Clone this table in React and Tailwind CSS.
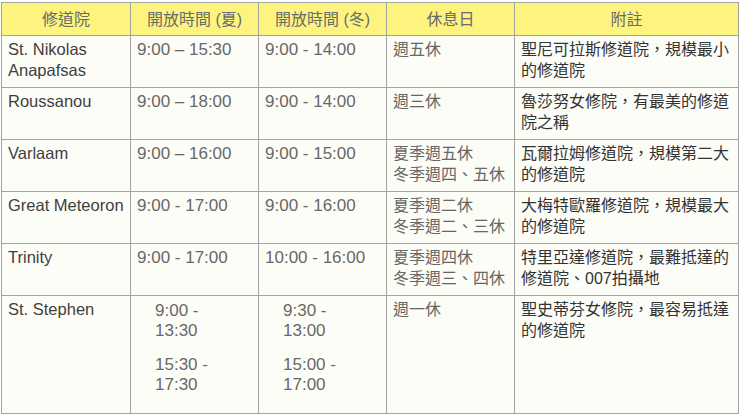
import React from 'react';

const ROWS = [
  {
    name: ['St. Nikolas', 'Anapafsas'],
    summer: '9:00 – 15:30',
    winter: '9:00 - 14:00',
    off: ['週五休'],
    note: '聖尼可拉斯修道院，規模最小的修道院',
  },
  {
    name: ['Roussanou'],
    summer: '9:00 – 18:00',
    winter: '9:00 - 14:00',
    off: ['週三休'],
    note: '魯莎努女修院，有最美的修道院之稱',
  },
  {
    name: ['Varlaam'],
    summer: '9:00 – 16:00',
    winter: '9:00 - 15:00',
    off: ['夏季週五休', '冬季週四、五休'],
    note: '瓦爾拉姆修道院，規模第二大的修道院',
  },
  {
    name: ['Great Meteoron'],
    summer: '9:00 - 17:00',
    winter: '9:00 - 16:00',
    off: ['夏季週二休', '冬季週二、三休'],
    note: '大梅特歐羅修道院，規模最大的修道院',
  },
  {
    name: ['Trinity'],
    summer: '9:00 - 17:00',
    winter: '10:00 - 16:00',
    off: ['夏季週四休', '冬季週三、四休'],
    note: '特里亞達修道院，最難抵達的修道院、007拍攝地',
  },
];

const cell = 'border border-[#a3a3a3] align-top pl-[6px] pr-[2px] pt-[3px]';
const head = 'border border-[#a3a3a3] text-center font-normal text-[#6b6b6b]';
const time = `${cell} text-[#686868] text-[17px]`;

export default function App() {
  return (
    <div className="w-[740px] h-[416px] bg-white pt-[2px] pl-[1px] font-['Liberation_Sans','Noto_Sans_CJK_TC',sans-serif] text-[16px] leading-[21px]">
      <table className="table-fixed border-collapse w-[737px] bg-[#fdfdf8]">
        <colgroup>
          <col className="w-[129px]" />
          <col className="w-[128px]" />
          <col className="w-[128px]" />
          <col className="w-[128px]" />
          <col className="w-[224px]" />
        </colgroup>
        <thead>
          <tr className="h-[33px] bg-[#fdf47f]">
            <th className={head}>修道院</th>
            <th className={head}>開放時間 (夏)</th>
            <th className={head}>開放時間 (冬)</th>
            <th className={head}>休息日</th>
            <th className={head}>附註</th>
          </tr>
        </thead>
        <tbody>
          {ROWS.map((r) => (
            <tr key={r.name[0]} className="h-[52px]">
              <td className={`${cell} text-[#3f3f3f] text-[16.5px] whitespace-nowrap`}>
                {r.name.map((n) => <div key={n}>{n}</div>)}
              </td>
              <td className={time}>{r.summer}</td>
              <td className={time}>{r.winter}</td>
              <td className={`${cell} text-[#666]`}>
                {r.off.map((o) => <div key={o}>{o}</div>)}
              </td>
              <td className={`${cell} text-[#333]`}>{r.note}</td>
            </tr>
          ))}
          <tr className="h-[118px]">
            <td className={`${cell} text-[#3f3f3f] text-[16.5px]`}>St. Stephen</td>
            <td className={time}>
              <div className="pl-[18px] pr-[20px] pt-[2px] leading-[20px] space-y-[14px]">
                <p>9:00 - 13:30</p>
                <p>15:30 - 17:30</p>
              </div>
            </td>
            <td className={time}>
              <div className="pl-[18px] pr-[20px] pt-[2px] leading-[20px] space-y-[14px]">
                <p>9:30 - 13:00</p>
                <p>15:00 - 17:00</p>
              </div>
            </td>
            <td className={`${cell} text-[#666]`}>週一休</td>
            <td className={`${cell} text-[#333]`}>聖史蒂芬女修院，最容易抵達的修道院</td>
          </tr>
        </tbody>
      </table>
    </div>
  );
}
